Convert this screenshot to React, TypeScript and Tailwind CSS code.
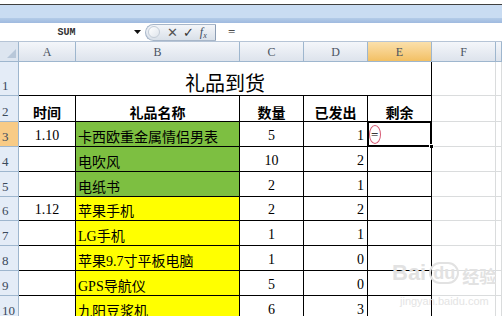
const GREEN = "bg-[#7dbf41]";
const YELLOW = "bg-[#ffff00]";

const rows = [
  { n: 3, h: "h-[25px]", a: "1.10", b: "卡西欧重金属情侣男表", c: "5", d: "1", fill: GREEN },
  { n: 4, h: "h-[25px]", a: "", b: "电吹风", c: "10", d: "2", fill: GREEN },
  { n: 5, h: "h-[25px]", a: "", b: "电纸书", c: "2", d: "1", fill: GREEN },
  { n: 6, h: "h-[24px]", a: "1.12", b: "苹果手机", c: "2", d: "2", fill: YELLOW },
  { n: 7, h: "h-[25px]", a: "", b: "LG手机", c: "1", d: "1", fill: YELLOW },
  { n: 8, h: "h-[25px]", a: "", b: "苹果9.7寸平板电脑", c: "1", d: "0", fill: YELLOW },
  { n: 9, h: "h-[25px]", a: "", b: "GPS导航仪", c: "5", d: "0", fill: YELLOW },
  { n: 10, h: "h-[25px]", a: "", b: "九阳豆浆机", c: "6", d: "3", fill: YELLOW },
];

const cols = "grid grid-cols-[19px_57px_164px_64px_64px_64px_64px_1fr]";
const cell = "border-r border-b border-black flex items-end";
const grid = "border-r border-b border-[#dadcdd]";

const RowHead = ({ n, active }: { n: number; active?: boolean }) => (
  <div
    className={`border-r border-b border-[#9eb6ce] flex items-end pl-[2px] pb-[3px] text-[13px] leading-none text-[#3b4a5c] ${
      active ? "bg-[#f8cb86]" : "bg-[#e4ecf7]"
    }`}
  >
    {n}
  </div>
);

const ColHead = ({ label, active }: { label: string; active?: boolean }) => (
  <div
    className={`border-r border-b border-[#9eb6ce] flex items-center justify-center text-[12px] text-[#4a5361] ${
      active
        ? "bg-gradient-to-b from-[#fbe0ab] to-[#f2c063]"
        : "bg-gradient-to-b from-[#f4f6fa] to-[#dde3ec]"
    }`}
  >
    {label}
  </div>
);

export default function App() {
  return (
    <div className="w-[502px] h-[316px] overflow-hidden bg-white relative font-['Liberation_Serif','Noto_Sans_CJK_SC',serif] text-black">
      {/* window chrome */}
      <div className="h-[5px] bg-white border-b border-[#404040]" />
      <div className="h-[13px] bg-[#c9dcf2]" />
      <div className="h-[5px] bg-gradient-to-b from-[#b3cbe8] to-[#9fbadf]" />

      {/* formula bar */}
      <div className="h-[19px] bg-white flex items-center border-b border-[#b6c4d6]">
        <div className="w-[130px] text-center font-['Liberation_Mono',monospace] text-[10px] font-bold text-[#333] pl-[3px]">
          SUM
        </div>
        <div className="w-[15px] flex justify-center">
          <svg width="7" height="4" viewBox="0 0 7 4">
            <path d="M0 0h7L3.5 4z" fill="#111" />
          </svg>
        </div>
        <div className="w-[71px] h-[17px] rounded-l-full border border-[#a7b6c9] border-r-[#8c9db4] bg-gradient-to-b from-[#f4f6f9] to-[#d9e0e9] flex items-center">
          <span className="ml-[2px] w-[12px] h-[12px] rounded-full border border-[#c3ccd7] bg-gradient-to-br from-[#ffffff] to-[#dfe5ec]" />
          <span className="ml-[7px] text-[13px] leading-none text-[#555] font-['DejaVu_Sans',sans-serif]">✕</span>
          <span className="ml-[5px] text-[13px] leading-none text-[#333] font-['DejaVu_Sans',sans-serif]">✓</span>
          <span className="ml-[6px] text-[12px] leading-none italic text-[#3c4a5c]">
            f<sub className="text-[8px]">x</sub>
          </span>
        </div>
        <div className="ml-[12px] text-[13px] text-[#222]">=</div>
      </div>

      {/* column headers */}
      <div className={`${cols} h-[20px]`}>
        <div className="border-r border-b border-[#9eb6ce] bg-[#dde5f0] relative">
          <svg className="absolute right-[2px] bottom-[3px]" width="9" height="9" viewBox="0 0 9 9">
            <path d="M9 0v9H0z" fill="#b8c7d9" />
          </svg>
        </div>
        <ColHead label="A" />
        <ColHead label="B" />
        <ColHead label="C" />
        <ColHead label="D" />
        <ColHead label="E" active />
        <ColHead label="F" />
        <ColHead label="" />
      </div>

      {/* row 1: title */}
      <div className={`${cols} h-[34px]`}>
        <RowHead n={1} />
        <div className="col-span-5 border-r border-b border-black flex items-end justify-center pb-[2px] text-[20px] leading-none font-['Noto_Sans_CJK_SC',sans-serif]">
          礼品到货
        </div>
        <div className={grid} />
        <div className={grid} />
      </div>

      {/* row 2: headers */}
      <div className={`${cols} h-[26px]`}>
        <RowHead n={2} />
        {["时间", "礼品名称", "数量", "已发出", "剩余"].map((t) => (
          <div
            key={t}
            className={`${cell} justify-center pb-[2px] text-[14px] leading-none font-bold font-['Noto_Sans_CJK_SC',sans-serif]`}
          >
            {t}
          </div>
        ))}
        <div className={grid} />
        <div className={grid} />
      </div>

      {/* data rows */}
      {rows.map((r) => (
        <div key={r.n} className={`${cols} ${r.h}`}>
          <RowHead n={r.n} active={r.n === 3} />
          <div className={`${cell} justify-center pb-[3px] text-[14px] leading-none`}>{r.a}</div>
          <div
            className={`${cell} ${r.fill} pl-[2px] pb-[1px] text-[14px] leading-none whitespace-nowrap font-['Liberation_Serif','Noto_Sans_CJK_SC',serif]`}
          >
            {r.b}
          </div>
          <div className={`${cell} justify-center pb-[3px] text-[14px] leading-none`}>{r.c}</div>
          <div className={`${cell} justify-end pr-[3px] pb-[3px] text-[14px] leading-none`}>{r.d}</div>
          <div className={`${cell} relative`}>
            {r.n === 3 && (
              <>
                <span className="absolute left-[3px] bottom-[5px] text-[13px] leading-none">=</span>
                <span className="absolute left-[1px] top-[3px] w-[12px] h-[19px] rounded-[50%] border border-[#d65a74]" />
                <span className="absolute -left-[1px] -top-[1px] w-[65px] h-[26px] border-2 border-black" />
                <span className="absolute -right-[3px] -bottom-[3px] w-[5px] h-[5px] bg-black border border-white" />
              </>
            )}
          </div>
          <div className={grid} />
          <div className={grid} />
        </div>
      ))}

      {/* watermark */}
      <div className="absolute left-[392px] top-[262px] flex items-end gap-[3px] whitespace-nowrap text-[#e2e2e2] font-['Liberation_Sans',sans-serif] font-bold leading-none">
        <span className="text-[22px]">Bai</span>
        <span className="text-[18px] rounded-full border-2 border-[#e2e2e2] px-[2px]">du</span>
        <span className="text-[17px] font-['Noto_Sans_CJK_SC',sans-serif]">经验</span>
      </div>
      <div className="absolute left-[400px] top-[296px] whitespace-nowrap text-[11px] text-[#e4e4e4] font-['Liberation_Sans',sans-serif] leading-none">
        jingyan.baidu.com
      </div>
    </div>
  );
}
